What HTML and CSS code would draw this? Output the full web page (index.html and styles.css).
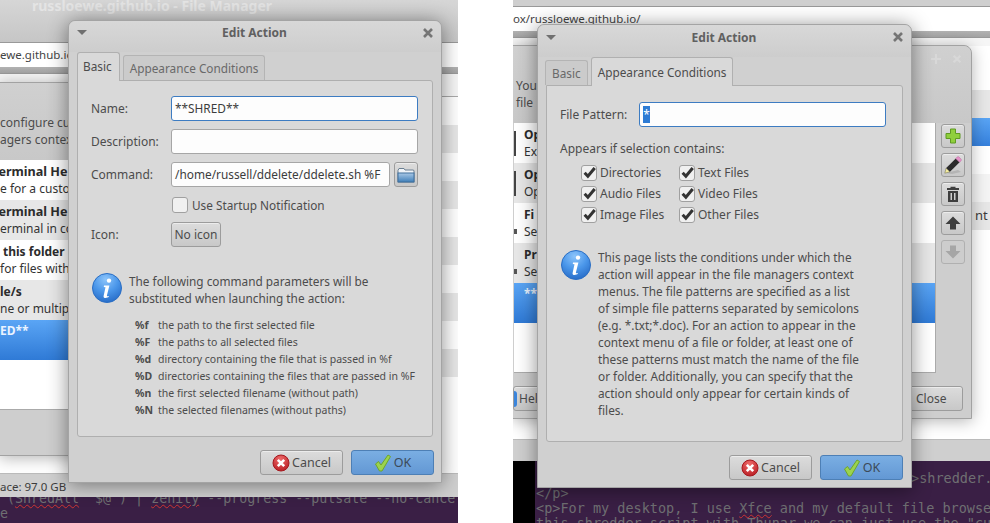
FILE: index.html
```html
<!DOCTYPE html>
<html lang="en">

<head>
  <meta charset="UTF-8">
  <title>Edit Action</title>
  <link rel="stylesheet" href="styles.css">
</head>

<body>
  <svg class="defs" width="0" height="0">
    <defs>
      <radialGradient id="g-info" cx="45%" cy="20%" r="85%">
        <stop offset="0" stop-color="#8cc4fa" />
        <stop offset="0.5" stop-color="#4b97ea" />
        <stop offset="1" stop-color="#2468c4" />
      </radialGradient>
      <radialGradient id="g-red" cx="45%" cy="25%" r="80%">
        <stop offset="0" stop-color="#ee6a6a" />
        <stop offset="1" stop-color="#b81c22" />
      </radialGradient>
      <linearGradient id="g-folder" x1="0" y1="0" x2="0" y2="1">
        <stop offset="0" stop-color="#a9c8e6" />
        <stop offset="1" stop-color="#3f7fb9" />
      </linearGradient>
      <symbol id="i-info" viewBox="0 0 30 30">
        <circle cx="15" cy="15" r="14.5" fill="url(#g-info)" stroke="#2a6ec4" />
        <circle cx="17" cy="7.6" r="2.2" fill="#fff" />
        <path d="M12 12.6h5.4l-2.5 10c-.2.8.3 1 1.7.4l.3.8c-1.700 1.200-5.900 2-5.300-.9l1.900-8.600-1.700-.3z" fill="#fff" />
      </symbol>
      <symbol id="i-cancel" viewBox="0 0 18 18">
        <circle cx="9" cy="9" r="8" fill="url(#g-red)" stroke="#a5181e" />
        <path d="M5.800 5.800l6.400 6.400M12.200 5.800l-6.400 6.400" stroke="#fff" stroke-width="2.600" />
      </symbol>
      <symbol id="i-ok" viewBox="0 0 18 18">
        <path d="M1.500 10l3-2.500 2.500 3.500L14 1l2.500 1.500L8 17H5.500z" fill="#9bd34e" stroke="#6ea52c" />
      </symbol>
      <symbol id="i-folder" viewBox="0 0 18 16">
        <path d="M1 3.500l1-2h5l1 1.500h8.500l.5 1V15H1z" fill="#f0f4f8" stroke="#6a7f92" />
        <rect x="1" y="6" width="16" height="9" fill="url(#g-folder)" stroke="#3f6f9c" />
      </symbol>
      <symbol id="i-plus" viewBox="0 0 16 16">
        <path d="M5.500 1h5v4.500H15v5h-4.500V15h-5v-4.500H1v-5h4.500z" fill="#8fcf3c" stroke="#5f9a22" />
      </symbol>
      <symbol id="i-pencil" viewBox="0 0 18 18">
        <path d="M2 17l12-3 3 2-9 2z" fill="#b4b4b4" />
        <path d="M.8 17.200l1.400-5.200 3.800 3.800z" fill="#f4eca0" stroke="#6b6b4a" stroke-width=".5" />
        <path d="M2.200 12L11.800 2.400l3.800 3.800L6 15.800z" fill="#2c2c2c" />
        <path d="M11.800 2.400l1.300-1.300c.7-.6 1.400-.6 2 0l1.800 1.800c.6.6.6 1.300 0 2l-1.300 1.300z" fill="#e493c8" stroke="#b86a9f" stroke-width=".5" />
      </symbol>
      <symbol id="i-trash" viewBox="0 0 16 16">
        <path d="M5.500 2V.8h5V2H14v2H2V2z" fill="#3e3e3e" />
        <path d="M3 5h10v11H3zM5.500 7v7h1.500V7zM9 7v7h1.500V7z" fill="#3e3e3e" fill-rule="evenodd" />
      </symbol>
      <symbol id="i-up" viewBox="0 0 16 16">
        <path d="M8 1.500l7.500 7.500H11v5.500H5V9H.5z" fill="currentColor" />
      </symbol>
      <symbol id="i-down" viewBox="0 0 16 16">
        <path d="M8 14.500L.5 7H5V1.500h6V7h4.500z" fill="currentColor" />
      </symbol>
      <symbol id="i-close" viewBox="0 0 12 12">
        <path d="M2 2l8 8M10 2l-8 8" stroke="currentColor" stroke-width="2.600" />
      </symbol>
      <symbol id="i-tick" viewBox="0 0 12 12">
        <path d="M1.500 6.200l3 3.200L10.800 1.800" fill="none" stroke="#333" stroke-width="2.800" />
      </symbol>
    </defs>
  </svg>

  <!-- left screenshot -->
  <div class="shot shot-left">
    <div class="fm">
      <div class="fm-title">russloewe.github.io - File Manager</div>
      <div class="fm-url">ewe.github.io</div>
      <div class="fm-band"></div>
      <div class="fm-crumb"></div>
      <div class="stripe"></div>
      <div class="stripe alt"></div>
      <div class="stripe"></div>
      <div class="stripe alt"></div>
      <div class="stripe"></div>
      <div class="stripe alt"></div>
      <div class="stripe"></div>
      <div class="stripe alt"></div>
      <div class="stripe"></div>
      <div class="stripe alt"></div>
      <div class="fm-blank"></div>
      <div class="fm-status">ace: 97.0 GB</div>
      <div class="term term-left">
        <div class="term-lines">
<span class="term-line term-first">(<u>ShredAll</u> "$@") | <u>zenity</u> --progress --pulsate --no-cance</span>
<span class="term-line">e</span>
        </div>
      </div>
    </div>

    <div class="back back-left">
      <div class="back-head">
        <div class="back-controls"></div>
        <p class="back-text">configure cus<br>agers context</p>
      </div>
      <div class="back-body">
        <div class="list">
          <div class="row">
            <div><b class="cut">Terminal He</b><br>e for a custo</div>
          </div>
          <div class="row alt">
            <div><b class="cut">Terminal He</b><br>erminal in co</div>
          </div>
          <div class="row">
            <div><b class="inset">this folder</b><br>for files with</div>
          </div>
          <div class="row alt">
            <div><b>le/s</b><br>ne or multipl</div>
          </div>
          <div class="row selected">
            <div><b>ED**</b></div>
          </div>
        </div>
      </div>
    </div>

    <div class="dialog dialog-left">
      <div class="dialog-title">
        <span class="menu-arrow"></span>
        <span class="dialog-name">Edit Action</span>
        <svg class="close-icon"><use href="#i-close" /></svg>
      </div>
      <div class="tabs">
        <div class="tab active">Basic</div>
        <div class="tab">Appearance Conditions</div>
      </div>
      <div class="panel">
        <div class="form">
          <label class="form-label">Name:</label>
          <div class="field focus">**SHRED**</div>
          <label class="form-label">Description:</label>
          <div class="field"></div>
          <label class="form-label">Command:</label>
          <div class="command">
            <div class="field">/home/russell/ddelete/ddelete.sh %F</div>
            <div class="btn btn-folder"><svg class="icon-folder"><use href="#i-folder" /></svg></div>
          </div>
          <span></span>
          <div class="startup"><span class="check"></span>Use Startup Notification</div>
          <label class="form-label">Icon:</label>
          <div class="icon-row">
            <div class="btn btn-noicon">No icon</div>
          </div>
        </div>
        <div class="message message-basic">
          <svg class="icon-info"><use href="#i-info" /></svg>
          <p>The following command parameters will be<br>substituted when launching the action:</p>
        </div>
        <div class="params">
          <b>%f</b><span>the path to the first selected file</span>
          <b>%F</b><span>the paths to all selected files</span>
          <b>%d</b><span>directory containing the file that is passed in %f</span>
          <b>%D</b><span>directories containing the files that are passed in %F</span>
          <b>%n</b><span>the first selected filename (without path)</span>
          <b>%N</b><span>the selected filenames (without paths)</span>
        </div>
      </div>
      <div class="dialog-foot">
        <div class="btn btn-action"><svg class="icon-btn"><use href="#i-cancel" /></svg>Cancel</div>
        <div class="btn btn-action btn-ok"><svg class="icon-btn"><use href="#i-ok" /></svg>OK</div>
      </div>
    </div>
  </div>

  <!-- right screenshot -->
  <div class="shot shot-right">
    <div class="fm">
      <div class="fm-title fm-title-short"></div>
      <div class="fm-url">ox/russloewe.github.io/</div>
      <div class="fm-band"></div>
      <div class="fm-crumb fm-crumb-short"></div>
      <div class="fm-spacer"></div>
      <div class="stripe alt"></div>
      <div class="stripe blue"></div>
      <div class="stripe"></div>
      <div class="stripe soft"></div>
      <div class="stripe alt nt"><span>nt</span></div>
      <div class="fm-blank fm-blank-right"></div>
      <div class="fm-status fm-status-right"></div>
      <div class="term term-right">
        <div class="term-black"></div>
        <div class="term-lines">
<span class="term-line term-behind">&gt;shredder.s</span>
<span class="term-line">&lt;/p&gt;</span>
<span class="term-line">&lt;p&gt;For my desktop, I use <u>Xfce</u> and my default file browse</span>
<span class="term-line">this shredder script with Thunar we can just use the "cu</span>
        </div>
      </div>
    </div>

    <div class="back back-right">
      <div class="back-head">
        <div class="back-controls">
          <span class="back-plus"></span>
          <svg class="back-close"><use href="#i-close" /></svg>
        </div>
        <p class="back-text">You<br>file</p>
      </div>
      <div class="back-body">
        <div class="list">
          <div class="row"><span class="row-icon dark"></span>
            <div><b>Op</b><br>Ex</div>
          </div>
          <div class="row alt"><span class="row-icon dark"></span>
            <div><b>Op</b><br>Op</div>
          </div>
          <div class="row"><span class="row-icon mark"></span>
            <div><b>Fi</b><br>Se</div>
          </div>
          <div class="row alt"><span class="row-icon mark"></span>
            <div><b>Pr</b><br>Se</div>
          </div>
          <div class="row selected"><span class="row-icon"></span>
            <div><b>**</b></div>
          </div>
        </div>
        <div class="side">
          <div class="btn btn-side"><svg class="icon-side"><use href="#i-plus" /></svg></div>
          <div class="btn btn-side"><svg class="icon-pencil"><use href="#i-pencil" /></svg></div>
          <div class="btn btn-side"><svg class="icon-side"><use href="#i-trash" /></svg></div>
          <div class="btn btn-side arrow"><svg class="icon-side"><use href="#i-up" /></svg></div>
          <div class="btn btn-side arrow disabled"><svg class="icon-side"><use href="#i-down" /></svg></div>
        </div>
      </div>
      <div class="back-foot">
        <div class="btn btn-help"><span class="help-dot"></span>Hel</div>
        <div class="btn btn-close">Close</div>
      </div>
    </div>

    <div class="dialog dialog-right">
      <div class="dialog-title">
        <span class="menu-arrow"></span>
        <span class="dialog-name">Edit Action</span>
        <svg class="close-icon"><use href="#i-close" /></svg>
      </div>
      <div class="tabs">
        <div class="tab">Basic</div>
        <div class="tab active">Appearance Conditions</div>
      </div>
      <div class="panel">
        <div class="pattern">
          <label>File Pattern:</label>
          <div class="field focus"><span class="selection">*</span></div>
        </div>
        <p class="appears">Appears if selection contains:</p>
        <div class="checks">
          <div class="check-item"><span class="check"><svg class="icon-tick"><use href="#i-tick" /></svg></span>Directories</div>
          <div class="check-item"><span class="check"><svg class="icon-tick"><use href="#i-tick" /></svg></span>Text Files</div>
          <div class="check-item"><span class="check"><svg class="icon-tick"><use href="#i-tick" /></svg></span>Audio Files</div>
          <div class="check-item"><span class="check"><svg class="icon-tick"><use href="#i-tick" /></svg></span>Video Files</div>
          <div class="check-item"><span class="check"><svg class="icon-tick"><use href="#i-tick" /></svg></span>Image Files</div>
          <div class="check-item"><span class="check"><svg class="icon-tick"><use href="#i-tick" /></svg></span>Other Files</div>
        </div>
        <div class="message message-cond">
          <svg class="icon-info"><use href="#i-info" /></svg>
          <p>This page lists the conditions under which the<br>action will appear in the file managers context<br>menus. The file patterns are specified as a list<br>of simple file patterns separated by semicolons<br>(e.g. *.txt;*.doc). For an action to appear in the<br>context menu of a file or folder, at least one of<br>these patterns must match the name of the file<br>or folder. Additionally, you can specify that the<br>action should only appear for certain kinds of<br>files.</p>
        </div>
      </div>
      <div class="dialog-foot">
        <div class="btn btn-action"><svg class="icon-btn"><use href="#i-cancel" /></svg>Cancel</div>
        <div class="btn btn-action btn-ok"><svg class="icon-btn"><use href="#i-ok" /></svg>OK</div>
      </div>
    </div>
  </div>
</body>

</html>
```

FILE: styles.css
```css
* {
  box-sizing: border-box;
}

body {
  margin: 0;
  width: 990px;
  height: 523px;
  overflow: hidden;
  background: #fff;
  font-family: "Noto Sans", sans-serif;
  font-size: 12px;
  color: #4c4c4c;
  position: relative;
}

p {
  margin: 0;
}

.defs {
  position: absolute;
}

.shot {
  position: absolute;
  top: 0;
  height: 523px;
  overflow: hidden;
}

.shot-left {
  left: 0;
  width: 458px;
}

.shot-right {
  left: 513px;
  width: 477px;
}

/* file manager behind everything */
.fm {
  display: flex;
  flex-direction: column;
  height: 523px;
  background: #fff;
}

.fm-title {
  height: 42px;
  flex: none;
  padding: 0 0 0 32px;
  line-height: 12px;
  font-size: 14px;
  font-weight: 700;
  color: #e4e4e4;
  background: linear-gradient(#d6d6d6, #c6c6c6);
  border-bottom: 1px solid #999;
  box-sizing: content-box;
}

.fm-title-short {
  height: 6px;
  background: #cfcfcf;
}

.fm-url {
  height: 24px;
  flex: none;
  overflow: hidden;
  background: #fff;
  line-height: 24px;
  font-size: 11.500px;
  color: #444;
  white-space: nowrap;
}

.fm-band {
  height: 7px;
  flex: none;
  background: linear-gradient(#b2b2b2, #a4a4a4);
  border-bottom: 1px solid #999;
}

.fm-crumb {
  height: 23px;
  flex: none;
  background: #f6f6f6;
  border-bottom: 1px solid #aaa;
}

.fm-crumb-short {
  height: 8px;
  border-bottom: 0;
}

.fm-spacer {
  height: 44px;
  flex: none;
  background: #fff;
}

.stripe {
  height: 28px;
  flex: none;
  background: #fff;
}

.stripe.alt {
  background: #e7e7e7;
}

.stripe.soft {
  background: #f4f4f4;
}

.stripe.blue {
  background: linear-gradient(#5aa5f5, #3580dc);
}

.nt span {
  display: block;
  padding-left: 462px;
  line-height: 26px;
  font-size: 13px;
  color: #3c3c3c;
}

.fm-blank {
  height: 96px;
  flex: none;
  background: #fff;
}

.fm-blank-right {
  height: 209px;
}

.fm-status {
  height: 24px;
  flex: none;
  background: #cfcfcf;
  border-top: 1px solid #bbb;
  line-height: 25px;
  font-size: 11.500px;
  color: #3c3c3c;
  white-space: nowrap;
  overflow: hidden;
}

.fm-status-right {
  height: 22px;
}

.term {
  flex: 1;
  min-height: 0;
  display: flex;
  overflow: hidden;
  background: #3a1f45;
  font-family: "DejaVu Sans Mono", monospace;
  font-size: 13.300px;
  line-height: 15px;
  color: #6f6f72;
}

.term-lines {
  display: flex;
  flex-direction: column;
  white-space: pre;
}

.term-line u {
  text-decoration: underline wavy #c33;
  text-decoration-thickness: 1px;
}

.term-left .term-lines {
  margin-top: -6px;
}

.term-first {
  padding-left: 7px;
}

.term-right {
  font-size: 13.500px;
}

.term-right .term-lines {
  padding-top: 10px;
  padding-left: 1px;
}

.term-behind {
  padding-left: 375px;
}

.term-black {
  width: 22px;
  flex: none;
  background: #000;
}

/* Custom actions window */
.back {
  position: absolute;
  width: 460px;
  height: 374px;
  background: #cecece;
  border: 1px solid #a2a2a2;
  border-top-right-radius: 8px;
  display: flex;
  flex-direction: column;
  box-shadow: 0 2px 16px rgba(0, 0, 0, .3);
}

.back-left {
  left: -1px;
  top: 82px;
  width: 300px;
}

.back-right {
  left: -1px;
  top: 45px;
}

.back-head {
  height: 77px;
  flex: none;
  background: linear-gradient(#d0d0d0, #c8c8c8);
  border-top-right-radius: 8px;
}

.back-controls {
  height: 25px;
  margin-bottom: 6px;
  display: flex;
  justify-content: flex-end;
  align-items: center;
  gap: 11px;
  padding-right: 9px;
  color: #d8d8d8;
}

.back-plus {
  width: 10px;
  height: 10px;
  background: linear-gradient(currentColor, currentColor) center / 10px 2px no-repeat, linear-gradient(currentColor, currentColor) center / 2px 10px no-repeat;
}

.back-close {
  width: 10px;
  height: 10px;
}

.back-text {
  line-height: 17px;
  white-space: nowrap;
  font-size: 12px;
}

.back-right .back-text {
  padding-left: 3px;
}

.back-body {
  height: 250px;
  flex: none;
  display: flex;
  gap: 5px;
  padding-left: 1px;
}

.back-left .back-body {
  padding-left: 0;
}

.list {
  width: 422px;
  flex: none;
  background: #fff;
  font-size: 12px;
  line-height: 17px;
  color: #333;
  white-space: nowrap;
  overflow: hidden;
  border-right: 1px solid #aaa;
  border-bottom: 1px solid #aaa;
}

.row {
  height: 40px;
  display: flex;
  align-items: center;
  gap: 8px;
}

.row.alt {
  background: #e7e7e7;
}

.row b {
  color: #2c2c2c;
}

.row.selected {
  align-items: flex-start;
  padding-top: 2px;
  background: linear-gradient(#5aa5f5, #2f7ad6);
  color: #fff;
}

.row.selected b {
  color: #eaf3ff;
}

.cut {
  margin-left: -8px;
  font-size: 12.600px;
}

.inset {
  margin-left: 3px;
}

.row-icon {
  width: 2px;
  height: 25px;
  flex: none;
}

.row-icon.dark {
  background: #444;
}

.row-icon.mark {
  width: 3px;
  height: 5px;
  margin: 16px -1px 0 0;
  background: #555;
}

.side {
  display: flex;
  flex-direction: column;
  gap: 5px;
  padding-top: 1px;
}

.back-foot {
  display: flex;
  justify-content: space-between;
  padding: 13px 8px 0 0;
}

.btn-help {
  width: 40px;
  height: 25px;
  justify-content: flex-start;
  gap: 2px;
  border-left: 0;
  border-radius: 0 3px 3px 0;
}

.help-dot {
  width: 3px;
  height: 16px;
  flex: none;
  background: #3c86dc;
  border-radius: 0 8px 8px 0;
}

.btn-close {
  width: 60px;
  height: 25px;
  justify-content: flex-start;
  padding-left: 12px;
}

/* buttons */
.btn {
  display: flex;
  align-items: center;
  background: linear-gradient(#dcdcdc, #c8c8c8);
  border: 1px solid #9c9c9c;
  border-radius: 3px;
  font-size: 12px;
  color: #4c4c4c;
  box-shadow: inset 0 1px 0 #ececec;
}

.btn-action {
  width: 83px;
  height: 25px;
  gap: 2px;
  justify-content: center;
  font-size: 12.500px;
}

.btn-ok {
  background: linear-gradient(#7aaee3, #6398d4);
  border-color: #4d7fb5;
  box-shadow: none;
  color: #3c4a58;
}

.btn-folder {
  width: 24px;
  height: 25px;
  justify-content: center;
}

.btn-noicon {
  width: 50px;
  height: 25px;
  justify-content: center;
}

.btn-side {
  width: 24px;
  height: 24px;
  justify-content: center;
}

.arrow {
  color: #3e3e3e;
}

.arrow.disabled {
  color: #a6a6a6;
  background: #cdcdcd;
  border-color: #b0b0b0;
  box-shadow: none;
}

.icon-btn {
  width: 18px;
  height: 18px;
}

.icon-folder {
  width: 18px;
  height: 16px;
}

.icon-side {
  width: 16px;
  height: 16px;
}

.icon-pencil {
  width: 18px;
  height: 18px;
}

.icon-tick {
  width: 13px;
  height: 13px;
}

.icon-info {
  width: 30px;
  height: 30px;
  flex: none;
  margin-left: 1px;
}

/* Edit Action dialog */
.dialog {
  position: absolute;
  display: flex;
  flex-direction: column;
  width: 375px;
  background: #d0d0d0;
  border: 1px solid #a4a4a4;
  border-radius: 7px 7px 0 0;
  box-shadow: 0 2px 20px rgba(0, 0, 0, .45);
}

.dialog-left {
  left: 68px;
  top: 20px;
  width: 374px;
  height: 463px;
}

.dialog-right {
  left: 24px;
  top: 24px;
  height: 464px;
}

.dialog-title {
  height: 31px;
  flex: none;
  display: flex;
  align-items: center;
  justify-content: space-between;
  padding: 0 7px 8px 8px;
  background: linear-gradient(#d8d8d8, #cdcdcd);
  border-radius: 7px 7px 0 0;
}

.dialog-right .dialog-title {
  height: 32px;
}

.menu-arrow {
  width: 0;
  height: 0;
  border-left: 5px solid transparent;
  border-right: 5px solid transparent;
  border-top: 5px solid #707070;
}

.dialog-name {
  font-size: 12px;
  font-weight: 700;
  color: #606060;
}

.close-icon {
  width: 12px;
  height: 12px;
  color: #757575;
}

.tabs {
  height: 28px;
  flex: none;
  display: flex;
  align-items: flex-end;
  gap: 3px;
  padding-left: 8px;
  position: relative;
  z-index: 1;
  font-size: 11.800px;
}

.dialog-right .tabs {
  padding-left: 7px;
}

.tab {
  height: 25px;
  padding: 0 6px;
  display: flex;
  align-items: center;
  background: #cbcbcb;
  border: 1px solid #b4b4b4;
  border-bottom: 0;
  border-radius: 3px 3px 0 0;
  color: #696969;
}

.tab.active {
  height: 29px;
  margin-bottom: -1px;
  background: #d9d9d9;
  border-color: #b0b0b0;
  color: #4c4c4c;
  padding-bottom: 1px;
}

.dialog-left .tab.active {
  padding: 0 7px 3px 5px;
}

.panel {
  height: 357px;
  flex: none;
  margin: 0 8px;
  padding: 16px 13px 0;
  background: #d9d9d9;
  border: 1px solid #afafaf;
  border-radius: 0 3px 3px 3px;
}

.dialog-left .panel {
  padding-top: 15px;
}

.dialog-foot {
  display: flex;
  justify-content: flex-end;
  gap: 8px;
  padding: 13px 8px 0 0;
}

.dialog-left .dialog-foot {
  padding-right: 7px;
}

.form {
  display: grid;
  grid-template-columns: 80px 247px;
  grid-template-rows: 25px 25px 25px 19px 25px;
  row-gap: 8px;
  align-items: center;
}

.form-label {
  color: #4c4c4c;
}

.field {
  height: 25px;
  flex: 1;
  padding: 0 3px;
  line-height: 23px;
  background: #fdfdfd;
  border: 1px solid #a6a6a6;
  border-radius: 3px;
  font-size: 11.850px;
  color: #3c3c3c;
  white-space: nowrap;
  overflow: hidden;
}

.field.focus {
  border-color: #3d7cc2;
}

.command {
  display: flex;
  gap: 4px;
}

.startup {
  display: flex;
  align-items: center;
  gap: 4px;
  padding-left: 1px;
  font-size: 11.800px;
}

.icon-row {
  display: flex;
}

.check {
  width: 16px;
  height: 16px;
  flex: none;
  display: flex;
  align-items: center;
  justify-content: center;
  background: #f0f0f0;
  border: 1px solid #a0a0a0;
  border-radius: 3px;
}

.message {
  display: flex;
  gap: 7px;
  line-height: 17px;
  font-size: 11.800px;
}

.message-basic {
  margin-top: 26px;
}

.message-cond {
  margin-top: 24px;
}

.message-cond .icon-info {
  margin-top: 1px;
}

.params {
  display: grid;
  grid-template-columns: 23px 1fr;
  margin: 10px 0 0 44px;
  font-size: 10.500px;
  line-height: 17px;
  white-space: nowrap;
}

.pattern {
  display: flex;
  align-items: center;
  height: 25px;
}

.pattern label {
  width: 79px;
  flex: none;
}

.pattern .field {
  flex: none;
  width: 247px;
}

.selection {
  display: inline-block;
  width: 7px;
  height: 17px;
  line-height: 17px;
  text-align: center;
  background: #2d7bd4;
  color: #fff;
}

.appears {
  margin-top: 13px;
  line-height: 18px;
}

.checks {
  display: grid;
  grid-template-columns: 98px 1fr;
  grid-auto-rows: 21px;
  margin: 4px 0 0 21px;
}

.check-item {
  display: flex;
  align-items: center;
  gap: 3px;
}
```
